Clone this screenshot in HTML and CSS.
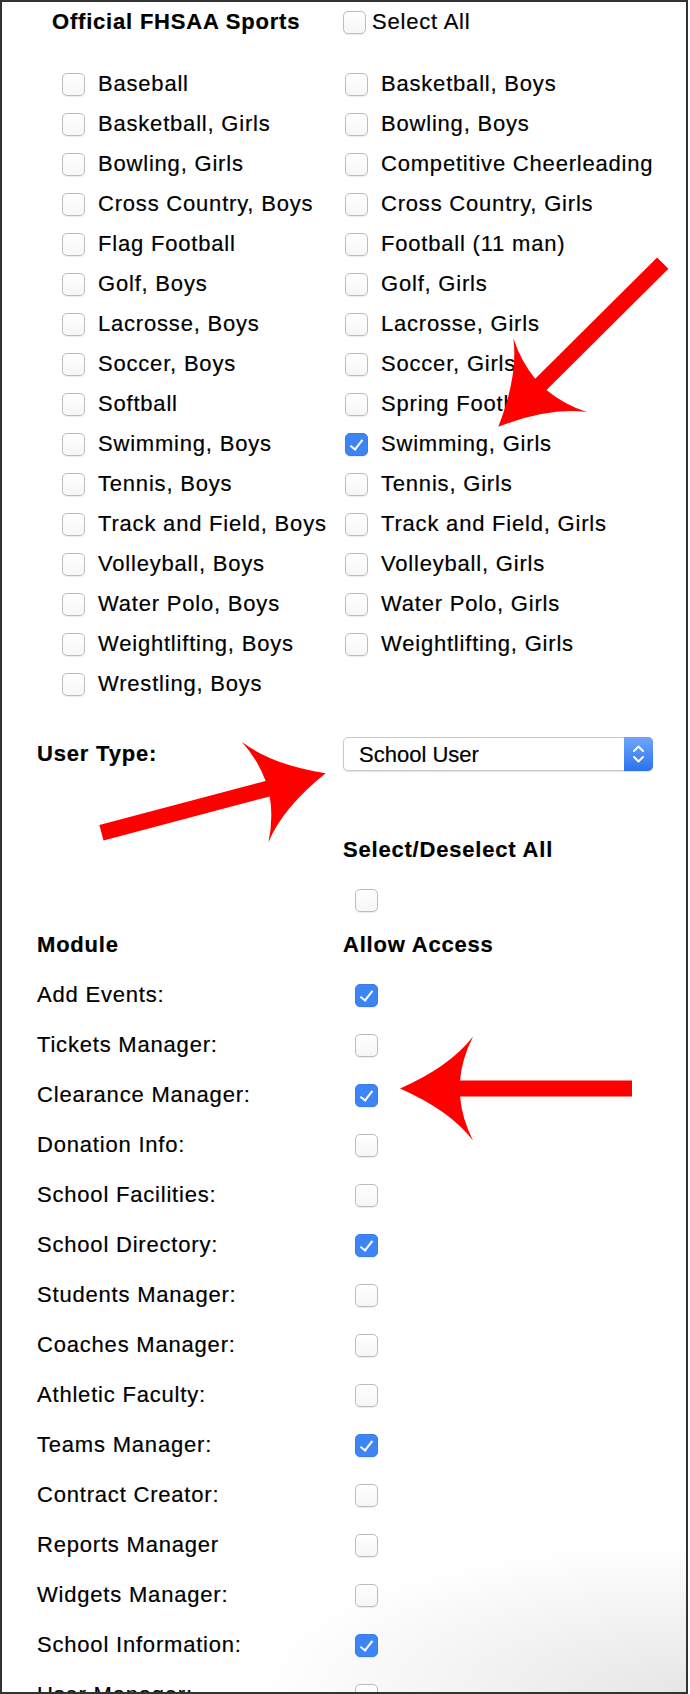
FILE: index.html
```html
<!DOCTYPE html>
<html lang="en">
<head>
  <meta charset="UTF-8">
  <meta name="viewport" content="width=device-width, initial-scale=1">
  <title>User Permissions</title>
  <link rel="stylesheet" href="styles.css">
</head>
<body>
  <div class="panel">
    <!-- Deportes -->
    <div class="sports-head">
      <h3>Official FHSAA Sports</h3>
      <label class="select-all"><input type="checkbox" class="cb"> Select All</label>
    </div>

    <div class="sports">
      <label class="opt"><input type="checkbox" class="cb">Baseball</label>
      <label class="opt"><input type="checkbox" class="cb">Basketball, Boys</label>
      <label class="opt"><input type="checkbox" class="cb">Basketball, Girls</label>
      <label class="opt"><input type="checkbox" class="cb">Bowling, Boys</label>
      <label class="opt"><input type="checkbox" class="cb">Bowling, Girls</label>
      <label class="opt"><input type="checkbox" class="cb">Competitive Cheerleading</label>
      <label class="opt"><input type="checkbox" class="cb">Cross Country, Boys</label>
      <label class="opt"><input type="checkbox" class="cb">Cross Country, Girls</label>
      <label class="opt"><input type="checkbox" class="cb">Flag Football</label>
      <label class="opt"><input type="checkbox" class="cb">Football (11 man)</label>
      <label class="opt"><input type="checkbox" class="cb">Golf, Boys</label>
      <label class="opt"><input type="checkbox" class="cb">Golf, Girls</label>
      <label class="opt"><input type="checkbox" class="cb">Lacrosse, Boys</label>
      <label class="opt"><input type="checkbox" class="cb">Lacrosse, Girls</label>
      <label class="opt"><input type="checkbox" class="cb">Soccer, Boys</label>
      <label class="opt"><input type="checkbox" class="cb">Soccer, Girls</label>
      <label class="opt"><input type="checkbox" class="cb">Softball</label>
      <label class="opt"><input type="checkbox" class="cb">Spring Football</label>
      <label class="opt"><input type="checkbox" class="cb">Swimming, Boys</label>
      <label class="opt"><input type="checkbox" class="cb" checked>Swimming, Girls</label>
      <label class="opt"><input type="checkbox" class="cb">Tennis, Boys</label>
      <label class="opt"><input type="checkbox" class="cb">Tennis, Girls</label>
      <label class="opt"><input type="checkbox" class="cb">Track and Field, Boys</label>
      <label class="opt"><input type="checkbox" class="cb">Track and Field, Girls</label>
      <label class="opt"><input type="checkbox" class="cb">Volleyball, Boys</label>
      <label class="opt"><input type="checkbox" class="cb">Volleyball, Girls</label>
      <label class="opt"><input type="checkbox" class="cb">Water Polo, Boys</label>
      <label class="opt"><input type="checkbox" class="cb">Water Polo, Girls</label>
      <label class="opt"><input type="checkbox" class="cb">Weightlifting, Boys</label>
      <label class="opt"><input type="checkbox" class="cb">Weightlifting, Girls</label>
      <label class="opt"><input type="checkbox" class="cb">Wrestling, Boys</label>
    </div>

    <!-- Tipo de usuario -->
    <div class="row user-type">
      <strong>User Type:</strong>
      <div class="select-wrap">
        <select class="user-select">
          <option>School User</option>
        </select>
        <span class="select-btn">
          <svg width="29" height="34" viewBox="0 0 29 34">
            <path d="M10 14 L14.5 9.5 L19 14 M10 20 L14.5 24.5 L19 20" fill="none" stroke="#fff" stroke-width="2" stroke-linecap="round" stroke-linejoin="round"/>
          </svg>
        </span>
      </div>
    </div>

    <!-- Permisos por modulo -->
    <div class="row toggle-title">
      <span></span>
      <strong>Select/Deselect All</strong>
    </div>
    <div class="row toggle-box">
      <span></span>
      <span class="cell"><input type="checkbox" class="cb"></span>
    </div>
    <div class="row module-head">
      <strong>Module</strong>
      <strong>Allow Access</strong>
    </div>
    <div class="row module"><span>Add Events:</span><span class="cell"><input type="checkbox" class="cb" checked></span></div>
    <div class="row module"><span>Tickets Manager:</span><span class="cell"><input type="checkbox" class="cb"></span></div>
    <div class="row module"><span>Clearance Manager:</span><span class="cell"><input type="checkbox" class="cb" checked></span></div>
    <div class="row module"><span>Donation Info:</span><span class="cell"><input type="checkbox" class="cb"></span></div>
    <div class="row module"><span>School Facilities:</span><span class="cell"><input type="checkbox" class="cb"></span></div>
    <div class="row module"><span>School Directory:</span><span class="cell"><input type="checkbox" class="cb" checked></span></div>
    <div class="row module"><span>Students Manager:</span><span class="cell"><input type="checkbox" class="cb"></span></div>
    <div class="row module"><span>Coaches Manager:</span><span class="cell"><input type="checkbox" class="cb"></span></div>
    <div class="row module"><span>Athletic Faculty:</span><span class="cell"><input type="checkbox" class="cb"></span></div>
    <div class="row module"><span>Teams Manager:</span><span class="cell"><input type="checkbox" class="cb" checked></span></div>
    <div class="row module"><span>Contract Creator:</span><span class="cell"><input type="checkbox" class="cb"></span></div>
    <div class="row module"><span>Reports Manager</span><span class="cell"><input type="checkbox" class="cb"></span></div>
    <div class="row module"><span>Widgets Manager:</span><span class="cell"><input type="checkbox" class="cb"></span></div>
    <div class="row module"><span>School Information:</span><span class="cell"><input type="checkbox" class="cb" checked></span></div>
    <div class="row module"><span>User Manager:</span><span class="cell"><input type="checkbox" class="cb"></span></div>
  </div>

  <!-- Flechas rojas encima -->
  <svg class="arrows" width="690" height="1694" viewBox="0 0 690 1694">
    <defs>
      <path id="arrow" d="M0 0 Q50 -22 73 -52 Q62 -30 60 -8 L232 -8 L232 8 L60 8 Q62 30 73 52 Q50 22 0 0 Z"/>
    </defs>
    <use href="#arrow" transform="translate(498.3 426.7) rotate(-44.86)"/>
    <use href="#arrow" transform="translate(325.7 773.3) rotate(165.15)"/>
    <use href="#arrow" transform="translate(400 1088.5)"/>
  </svg>
</body>
</html>
```

FILE: styles.css
```css
body {
  margin: 0;
  background: #fff;
  font-family: "Liberation Sans", Arial, sans-serif;
  font-size: 22px;
  letter-spacing: 0.8px;
  color: #000;
  -webkit-text-stroke: 0.2px #000;
  position: relative;
}
.panel {
  width: 684px;
  height: 1690px;
  border: 2px solid #333;
  overflow: hidden;
  background: radial-gradient(ellipse 430px 150px at 100% 100%, #e6e6e6, #fff);
}
.sports-head {
  display: grid;
  grid-template-columns: 291px auto;
  align-items: center;
  height: 40px;
  padding-left: 50px;
}
.sports-head h3 {
  margin: 0;
  font-size: 22px;
}
.select-all {
  display: flex;
  align-items: center;
  gap: 6px;
}
.sports {
  display: grid;
  grid-template-columns: 283px auto;
  grid-auto-rows: 40px;
  margin-top: 22px;
  padding-left: 60px;
}
.opt {
  display: flex;
  align-items: center;
  gap: 13px;
  white-space: nowrap;
}
.cb {
  appearance: none;
  -webkit-appearance: none;
  box-sizing: border-box;
  width: 23px;
  height: 23px;
  margin: 0;
  flex: none;
  border: 1px solid #bdbdbd;
  border-radius: 5px;
  background: linear-gradient(#fff, #f6f6f6);
  box-shadow: 0 0.5px 1px rgba(0,0,0,0.08);
  position: relative;
}
.cb:checked {
  background: #3d84f4;
  border-color: #3a7be9;
}
.cb:checked::after {
  content: "";
  position: absolute;
  left: 7px;
  top: 3px;
  width: 5px;
  height: 11px;
  border: solid #fff;
  border-width: 0 2px 2px 0;
  transform: rotate(38deg);
}
.row {
  display: grid;
  grid-template-columns: 306px auto;
  align-items: center;
  padding-left: 35px;
}
.user-type {
  height: 34px;
  margin-top: 33px;
}
.select-wrap {
  position: relative;
  width: 310px;
  height: 34px;
}
.user-select {
  appearance: none;
  -webkit-appearance: none;
  width: 100%;
  height: 100%;
  margin: 0;
  padding: 0 0 0 15px;
  border: 1px solid #c9c9c9;
  border-radius: 5px;
  background: #fff;
  box-shadow: 0 1px 1px rgba(0,0,0,0.12);
  font-family: "Liberation Sans", Arial, sans-serif;
  font-size: 22px;
  letter-spacing: 0;
  color: #000;
}
.select-btn {
  position: absolute;
  top: 0;
  right: 0;
  width: 29px;
  height: 34px;
  border-radius: 0 5px 5px 0;
  background: linear-gradient(#6ea7fb, #2c72ef);
}
.select-btn svg {
  display: block;
}
.toggle-title {
  height: 40px;
  margin-top: 59px;
}
.toggle-box {
  height: 40px;
  margin-top: 10px;
}
.module-head {
  height: 50px;
}
.module {
  height: 50px;
}
.cell {
  display: flex;
  padding-left: 12px;
}
.arrows {
  position: absolute;
  top: 0;
  left: 0;
  fill: #ff0000;
  pointer-events: none;
}
```
